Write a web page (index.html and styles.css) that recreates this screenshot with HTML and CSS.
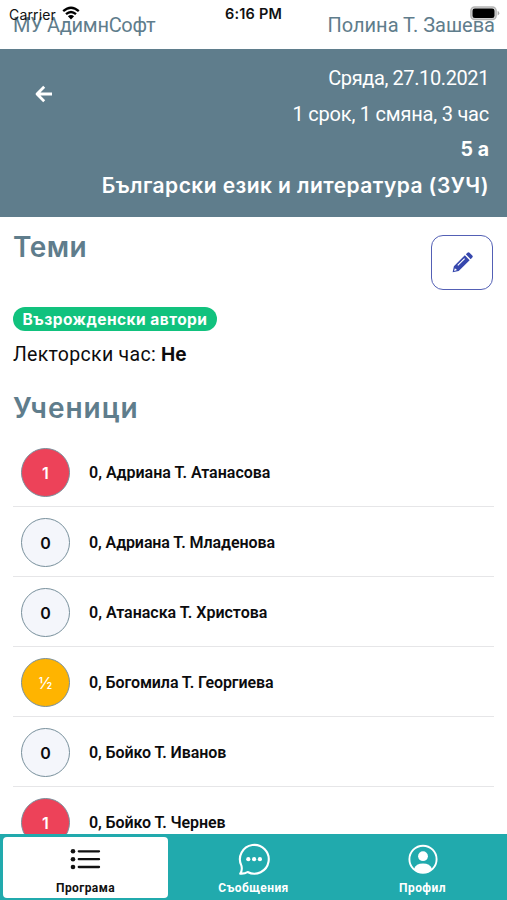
FILE: index.html
```html
<!DOCTYPE html>
<html lang="bg">
<head>
<meta charset="utf-8">
<title>Програма</title>
<link rel="stylesheet" href="styles.css">
</head>
<body>
<div class="app">
  <header class="topbar">
    <span class="school">МУ АдимнСофт</span>
    <span class="teacher">Полина Т. Зашева</span>
  </header>
  <div class="status">
    <span class="carrier">Carrier</span>
    <svg class="wifi" viewBox="0 0 18 14"><path d="M1.2 5.2Q9 -1.8 16.8 5.2M4 8.2Q9 3.8 14 8.2" fill="none" stroke="#000" stroke-width="2.3"/><path d="M5.9 10.2Q9 7.7 12.1 10.2L9 13.4Z"/></svg>
    <span class="clock">6:16 PM</span>
    <svg class="battery" viewBox="0 0 30 15"><rect x=".9" y=".9" width="25.2" height="12.7" rx="3.8" fill="#ddd" stroke="#b5b5b5" stroke-width="1.5"/><rect x="2.5" y="2.5" width="22" height="9.5" rx="2.3"/><path d="M27.6 5Q29.3 5.6 29.3 7.2T27.6 9.5Z" fill="#aaa"/></svg>
  </div>
  <section class="lesson">
    <svg class="back" viewBox="0 0 18 18"><path d="M9.2 1.8L2 9l7.2 7.2M2 9h15" fill="none" stroke="#fff" stroke-width="2.8" stroke-linejoin="round"/></svg>
    <div class="lesson-info">
      <span class="date">Сряда, 27.10.2021</span>
      <span class="term">1 срок, 1 смяна, 3 час</span>
      <b class="grade">5 а</b>
      <span class="subject">Български език и литература (ЗУЧ)</span>
    </div>
  </section>
  <main class="content">
    <div class="topic-head">
      <h2 class="h-topics">Теми</h2>
      <button class="edit" aria-label="Редактирай"><svg viewBox="0 0 20 20"><path fill-rule="evenodd" d="M12.2 3.2l4.6 4.6L6.4 18.2l-5.8 1.2 1.2-5.8ZM11.6 5.9L5.1 12.4l.8.8 6.5-6.5ZM2.6 15.6l-.6 2.4 2.4-.6-.3-1.3ZM13.2 2.2l1.5-1.5q1-1 2 0l2.6 2.6q1 1 0 2l-1.5 1.5Z" fill="#3647ad"/></svg></button>
    </div>
    <span class="topic">Възрожденски автори</span>
    <p class="extra">Лекторски час: <b>Не</b></p>
    <h2 class="h-students">Ученици</h2>
    <ul class="students">
      <li><span class="mark red">1</span><span class="name">0, Адриана Т. Атанасова</span></li>
      <li><span class="mark">0</span><span class="name n2">0, Адриана Т. Младенова</span></li>
      <li><span class="mark">0</span><span class="name">0, Атанаска Т. Христова</span></li>
      <li><span class="mark amber">½</span><span class="name n2">0, Богомила Т. Георгиева</span></li>
      <li><span class="mark">0</span><span class="name n2">0, Бойко Т. Иванов</span></li>
      <li><span class="mark red">1</span><span class="name n2">0, Бойко Т. Чернев</span></li>
    </ul>
  </main>
  <nav class="tabs">
    <a class="tab active"><svg viewBox="0 0 32 32"><g stroke="#111" stroke-width="2.3" stroke-linecap="round"><path d="M8.8 8.3h20.2M8.8 16.2h20.2M8.8 24h20.2"/></g><g fill="#111"><circle cx="3" cy="8.3" r="2.3"/><circle cx="3" cy="16.2" r="2.3"/><circle cx="3" cy="24" r="2.3"/></g></svg><span>Програма</span></a>
    <a class="tab"><svg viewBox="0 0 32 32"><path d="M3.4 22.6A14.4 14.4 0 1 1 9.6 29Q6.6 31 2.2 30.6Q4.6 27.6 3.4 22.6Z" fill="none" stroke="#fff" stroke-width="2.1" stroke-linejoin="round"/><g fill="#fff"><circle cx="10.3" cy="16.2" r="2.1"/><circle cx="16.1" cy="16.2" r="2.1"/><circle cx="21.9" cy="16.2" r="2.1"/></g></svg><span>Съобщения</span></a>
    <a class="tab"><svg viewBox="0 0 32 32"><circle cx="16" cy="16.3" r="13.6" fill="none" stroke="#fff" stroke-width="1.9"/><circle cx="16" cy="13.2" r="4.9" fill="#fff"/><path d="M7 26Q9 20.6 16 20.6T25 26Q21 30 16 30T7 26Z" fill="#fff"/></svg><span>Профил</span></a>
  </nav>
</div>
</body>
</html>
```

FILE: styles.css
```css
* { box-sizing: border-box; }
body { margin: 0; background: #fff; color: #0c0c0e; font-family: Roboto, "Noto Sans", sans-serif; }
.app { position: relative; width: 507px; height: 900px; display: flex; flex-direction: column; overflow: hidden; }
.topbar { flex: 0 0 49px; display: flex; justify-content: space-between; padding: 13px 12px 0 13px; font-size: 20px; line-height: 24px; color: #5f7d8c; white-space: nowrap; }
.school { letter-spacing: -.3px; }
.status { position: absolute; inset: 0 0 auto; height: 28px; display: flex; align-items: center; padding: 0 7px 0 9px; font-family: Inter, sans-serif; color: #111; }
.carrier { font-size: 14px; letter-spacing: .15px; width: 47px; }
.wifi { width: 18px; height: 14px; margin-left: 6px; margin-top: -3px; }
.clock { position: absolute; left: 0; right: 0; top: 5px; text-align: center; font-size: 14.5px; letter-spacing: .2px; font-weight: 600; }
.battery { width: 30px; height: 15px; margin-left: auto; margin-top: -2px; }
.lesson { flex: 0 0 168px; display: flex; justify-content: space-between; background: #5f7d8c; color: #fff; padding: 12px 18px 0 35px; }
.back { width: 18px; height: 18px; margin-top: 24px; flex: none; }
.lesson-info { display: flex; flex-direction: column; align-items: flex-end; font-size: 20px; line-height: 35.5px; white-space: nowrap; }
.date { letter-spacing: -.4px; }
.term { letter-spacing: -.22px; }
.grade { font-family: Inter, sans-serif; font-size: 19.5px; }
.subject { font-family: Inter, sans-serif; font-size: 21px; font-weight: 600; letter-spacing: .43px; }
.content { flex: 1; min-height: 0; overflow: hidden; padding: 18px 13px 0; }
.topic-head { display: flex; justify-content: space-between; height: 72px; }
h2 { margin: 0; font-family: Inter, sans-serif; font-size: 28px; line-height: 24px; font-weight: 600; color: #5f7d8c; }
.h-topics { letter-spacing: .4px; }
.edit { width: 62px; height: 55px; margin: 0 1px 0 0; display: grid; place-items: center; padding: 0; background: #fff; border: 1.5px solid #5360b5; border-radius: 12px; }
.edit svg { width: 21px; height: 21px; }
.topic { display: flex; align-items: center; justify-content: center; width: 204px; height: 24px; border-radius: 12px; background: #11c27e; color: #fff; font-family: Inter, sans-serif; font-size: 15.5px; font-weight: 700; letter-spacing: .45px; white-space: nowrap; }
.extra { height: 24px; margin: 12px 0 0; font-size: 19.5px; line-height: 24px; letter-spacing: .3px; }
.extra b { font-family: Inter, sans-serif; font-size: 19px; letter-spacing: 0; }
.h-students { margin-top: 29px; letter-spacing: 1px; }
.students { list-style: none; margin: 17px 0 0; padding: 0; }
.students li { height: 70px; display: flex; align-items: center; border-bottom: 1px solid #e6e6e8; padding: 2px 0 0 8px; }
.mark { width: 49px; height: 49px; border-radius: 50%; border: 1.5px solid #78909c; background: #f4f6fb; display: flex; align-items: center; justify-content: center; padding-top: 1px; font-family: Inter, sans-serif; font-size: 16px; font-weight: 600; }
.mark.red { background: #ed4259; color: #fff; }
.mark.amber { background: #ffb400; color: #fff; font-weight: 400; }
.name { margin-left: 19px; font-size: 16px; font-weight: 600; }
.n2 { letter-spacing: -.1px; }
.tabs { flex: 0 0 66px; display: grid; grid-template-columns: repeat(3, 1fr); background: #21aaad; padding: 3px 0 2px; }
.tab { display: flex; flex-direction: column; align-items: center; color: #fff; font-size: 12px; line-height: 14px; font-weight: 700; letter-spacing: .4px; padding-top: 6px; }
.tab svg { width: 32px; height: 32px; margin-bottom: 6px; }
.tab.active { background: #fff; color: #111; border-radius: 4px; margin: 0 1px 0 3px; }
```
